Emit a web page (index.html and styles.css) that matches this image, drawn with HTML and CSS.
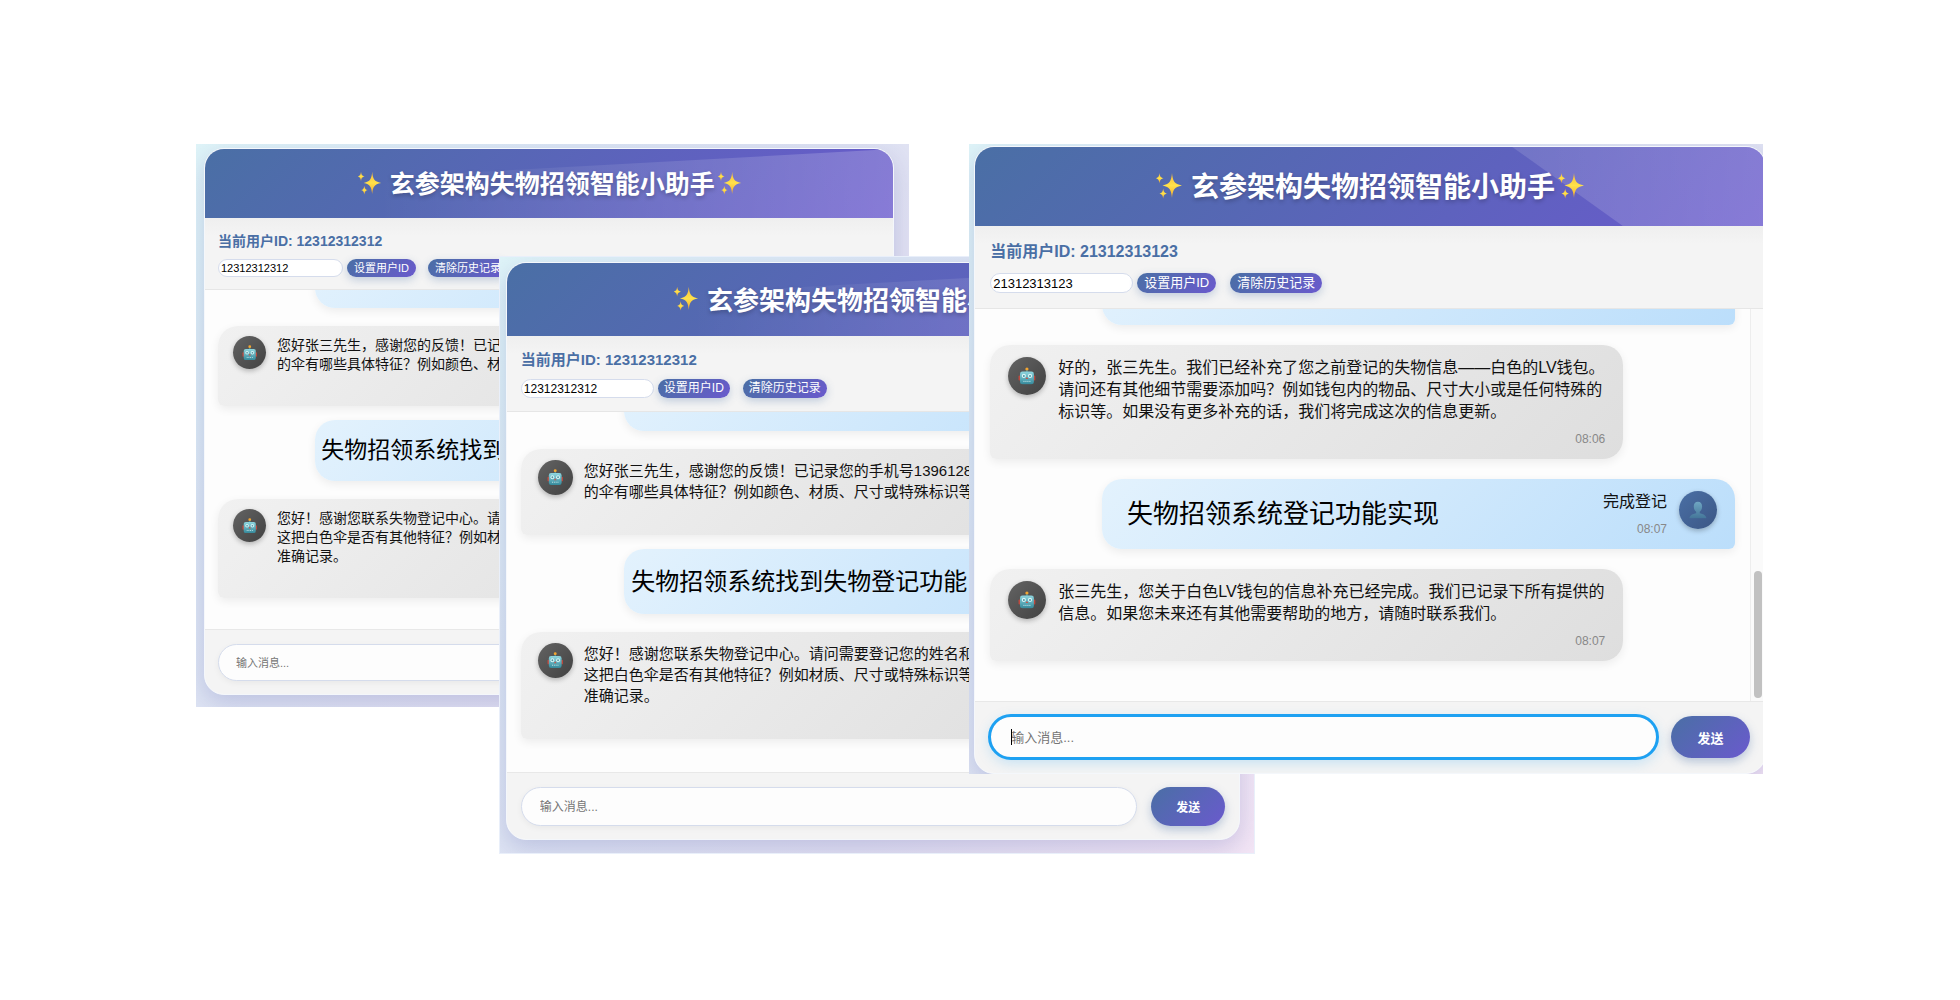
FILE: index.html
```html
<!DOCTYPE html>
<html lang="zh-CN">
  <head>
    <title>玄参架构失物招领智能小助手</title>
    <meta name="viewport" content="width=device-width, initial-scale=1" />
    <meta charset="utf-8" />
    <link rel="stylesheet" href="styles.css" />
  </head>
  <body>
    <!-- shared icons -->
    <svg class="icons" aria-hidden="true">
      <defs>
        <linearGradient id="gold" x1="0" y1="0" x2="0" y2="1">
          <stop offset="0" stop-color="#f6b93b" />
          <stop offset="0.5" stop-color="#ffe14a" />
          <stop offset="1" stop-color="#f3a52c" />
        </linearGradient>
        <linearGradient id="metal" x1="0" y1="0" x2="0" y2="1">
          <stop offset="0" stop-color="#8fd6df" />
          <stop offset="1" stop-color="#35899b" />
        </linearGradient>
        <linearGradient id="person" x1="0" y1="0" x2="0" y2="1">
          <stop offset="0" stop-color="#6fa6c2" />
          <stop offset="1" stop-color="#447699" />
        </linearGradient>
      </defs>
      <symbol id="sparkles" viewBox="0 0 28 28">
        <path fill="url(#gold)" d="M17 2C17.800 10 19 13 27 14.500C19 16 17.800 19 17 27C16.200 19 15 16 7.500 14.500C15 13 16.200 10 17 2Z" />
        <path fill="url(#gold)" d="M4.500 2C5 5.500 5.600 6.500 8.500 7.200C5.600 8 5 9 4.500 12.500C4 9 3.400 8 .8 7.200C3.400 6.500 4 5.500 4.500 2Z" />
        <path fill="url(#gold)" d="M8.200 17.500C8.700 20.800 9.300 21.800 12 22.500C9.300 23.200 8.700 24.300 8.200 27.500C7.700 24.300 7.100 23.200 4.500 22.500C7.100 21.800 7.700 20.800 8.200 17.500Z" />
      </symbol>
      <symbol id="robot" viewBox="0 0 18 18">
        <path fill="#3f97a8" d="M8.300 2.500h1.400v3H8.300z" />
        <circle cx="9" cy="2" r="1.600" fill="#f2a531" />
        <rect x=".5" y="8.500" width="2" height="5" rx="1" fill="#c0483d" />
        <rect x="15.500" y="8.500" width="2" height="5" rx="1" fill="#c0483d" />
        <rect x="2" y="4.500" width="14" height="13" rx="2.500" fill="url(#metal)" />
        <circle cx="5.900" cy="9" r="2.100" fill="#d9f5f7" />
        <circle cx="12.100" cy="9" r="2.100" fill="#d9f5f7" />
        <circle cx="5.900" cy="9" r="1" fill="#4d95a2" />
        <circle cx="12.100" cy="9" r="1" fill="#4d95a2" />
        <path fill="#c8564c" d="M9 10l1.400 2.200H7.600z" />
        <path fill="none" stroke="#d5eef0" d="M5.500 14.500h7" stroke-dasharray="1 1" />
      </symbol>
      <symbol id="user" viewBox="0 0 18 18">
        <path fill="url(#person)" d="M9 .8C6.300.8 4.800 2.700 4.800 5.500C4.800 8 5.900 9.800 7.200 10.900V12.400C4 13.200 1 14 .3 17.500H17.700C17 14 14 13.200 10.800 12.400V10.900C12.100 9.800 13.200 8 13.200 5.500C13.200 2.700 11.700.8 9 .8Z" />
      </symbol>
    </svg>

    <main class="stage">
      <section class="window window--back">
        <div class="card">
          <header class="header">
            <h1 class="title">
              <svg class="sparkle"><use href="#sparkles" /></svg>
              <span>玄参架构失物招领智能小助手</span>
              <svg class="sparkle"><use href="#sparkles" /></svg>
            </h1>
          </header>
          <div class="userbar">
            <label class="userLabel" for="userId1">当前用户ID: 12312312312</label>
            <div class="userRow">
              <input type="text" class="userInput" id="userId1" value="12312312312" />
              <button class="smallButton">设置用户ID</button>
              <button class="smallButton clear">清除历史记录</button>
            </div>
          </div>
          <div class="chat">
            <div class="log">
              <div class="bubble user"></div>
              <div class="bubble bot">
                <div class="avatar"><svg><use href="#robot" /></svg></div>
                <div class="body">
                  <p>您好张三先生，感谢您的反馈！已记录<br />的伞有哪些具体特征？例如颜色、材质</p>
                  <time class="time"></time>
                </div>
              </div>
              <div class="bubble user">
                <p class="caption">失物招领系统找到</p>
              </div>
              <div class="bubble bot">
                <div class="avatar"><svg><use href="#robot" /></svg></div>
                <div class="body">
                  <p>您好！感谢您联系失物登记中心。请问<br />这把白色伞是否有其他特征？例如材质<br />准确记录。</p>
                  <time class="time"></time>
                </div>
              </div>
            </div>
            <div class="track"></div>
          </div>
          <form class="composer">
            <div class="field">
              <input type="text" class="message" placeholder="输入消息..." aria-label="输入消息" />
            </div>
          </form>
        </div>
      </section>

      <section class="window window--middle">
        <div class="card">
          <header class="header">
            <h1 class="title">
              <svg class="sparkle"><use href="#sparkles" /></svg>
              <span>玄参架构失物招领智能小助手</span>
              <svg class="sparkle"><use href="#sparkles" /></svg>
            </h1>
          </header>
          <div class="userbar">
            <label class="userLabel" for="userId2">当前用户ID: 12312312312</label>
            <div class="userRow">
              <input type="text" class="userInput" id="userId2" value="12312312312" />
              <button class="smallButton">设置用户ID</button>
              <button class="smallButton clear">清除历史记录</button>
            </div>
          </div>
          <div class="chat">
            <div class="log">
              <div class="bubble user"></div>
              <div class="bubble bot">
                <div class="avatar"><svg><use href="#robot" /></svg></div>
                <div class="body">
                  <p>您好张三先生，感谢您的反馈！已记录您的手机号13961289<br />的伞有哪些具体特征？例如颜色、材质、尺寸或特殊标识等细</p>
                  <time class="time"></time>
                </div>
              </div>
              <div class="bubble user">
                <p class="caption">失物招领系统找到失物登记功能</p>
              </div>
              <div class="bubble bot">
                <div class="avatar"><svg><use href="#robot" /></svg></div>
                <div class="body">
                  <p>您好！感谢您联系失物登记中心。请问需要登记您的姓名和手<br />这把白色伞是否有其他特征？例如材质、尺寸或特殊标识等细<br />准确记录。</p>
                  <time class="time"></time>
                </div>
              </div>
            </div>
            <div class="track"></div>
          </div>
          <form class="composer">
            <div class="field">
              <input type="text" class="message" placeholder="输入消息..." aria-label="输入消息" />
            </div>
            <button type="button" class="send">发送</button>
          </form>
        </div>
      </section>

      <section class="window window--front">
        <div class="card">
          <header class="header">
            <h1 class="title">
              <svg class="sparkle"><use href="#sparkles" /></svg>
              <span>玄参架构失物招领智能小助手</span>
              <svg class="sparkle"><use href="#sparkles" /></svg>
            </h1>
          </header>
          <div class="userbar">
            <label class="userLabel" for="userId3">当前用户ID: 21312313123</label>
            <div class="userRow">
              <input type="text" class="userInput" id="userId3" value="21312313123" />
              <button class="smallButton">设置用户ID</button>
              <button class="smallButton clear">清除历史记录</button>
            </div>
          </div>
          <div class="chat">
            <div class="log">
              <div class="bubble user"></div>
              <div class="bubble bot">
                <div class="avatar"><svg><use href="#robot" /></svg></div>
                <div class="body">
                  <p>好的，张三先生。我们已经补充了您之前登记的失物信息——白色的LV钱包。<br />请问还有其他细节需要添加吗？例如钱包内的物品、尺寸大小或是任何特殊的<br />标识等。如果没有更多补充的话，我们将完成这次的信息更新。</p>
                  <time class="time">08:06</time>
                </div>
              </div>
              <div class="bubble user">
                <p class="caption">失物招领系统登记功能实现</p>
                <div class="body">
                  <p>完成登记</p>
                  <time class="time">08:07</time>
                </div>
                <div class="avatar"><svg><use href="#user" /></svg></div>
              </div>
              <div class="bubble bot">
                <div class="avatar"><svg><use href="#robot" /></svg></div>
                <div class="body">
                  <p>张三先生，您关于白色LV钱包的信息补充已经完成。我们已记录下所有提供的<br />信息。如果您未来还有其他需要帮助的地方，请随时联系我们。</p>
                  <time class="time">08:07</time>
                </div>
              </div>
            </div>
            <div class="track"><div class="thumb"></div></div>
          </div>
          <form class="composer">
            <div class="field focused">
              <input type="text" class="message" placeholder="输入消息..." aria-label="输入消息" />
            </div>
            <button type="button" class="send">发送</button>
          </form>
        </div>
      </section>
    </main>
  </body>
</html>
```

FILE: styles.css
```css
* {
  margin: 0;
  padding: 0;
  box-sizing: border-box;
}

body {
  background-color: #fff;
  color: #111;
  font-family: "Liberation Sans", "Noto Sans CJK SC", sans-serif;
}

button,
input {
  font-family: inherit;
}

.icons {
  position: absolute;
  width: 0;
  height: 0;
}

.stage {
  position: relative;
  min-height: 100vh;
  overflow: hidden;
}

/* windows, every one in its own scale */
.window {
  position: absolute;
  overflow: hidden;
  background: linear-gradient(135deg, #dff4f8, #dce6f4 30%, #e2e0f2 70%, #f3e5f5);
}

.window--back {
  --title: 25px;
  --text: 14px;
  --line: 19px;
  --small: 11px;
  --caption: 23px;
  --caption-left: 6px;
  --header: 69px;
  --bar-top: 13px;
  --bar-gap: 8px;
  --control: 18px;
  --button-pad: 7px;
  --user-input: 125px;
  --clear-gap: 12px;
  --edge: 13px;
  --log: 339px;
  --log-bottom: 31px;
  --pad-y: 10px;
  --pad-x: 15px;
  --avatar: 33px;
  --gap: 11px;
  --time: 14px;
  --time-gap: 8px;
  --after-bot: 14px;
  --field: 37px;
  --field-pad: 17px;
  --send: 68px;
  top: 144px;
  left: 10%;
  width: 36.4%;
  padding: 4px 15px 12px 8px;
}

.window--middle {
  --title: 26px;
  --text: 15px;
  --line: 21px;
  --small: 12px;
  --caption: 24px;
  --caption-left: 7px;
  --header: 73px;
  --bar-top: 14px;
  --bar-gap: 9px;
  --control: 19px;
  --button-pad: 6px;
  --user-input: 133px;
  --clear-gap: 13px;
  --edge: 14px;
  --log: 360px;
  --log-bottom: 33px;
  --pad-y: 11px;
  --pad-x: 17px;
  --avatar: 35px;
  --gap: 11px;
  --time: 15px;
  --time-gap: 7px;
  --after-bot: 14px;
  --field: 39px;
  --field-pad: 18px;
  --send: 74px;
  top: 256px;
  left: 25.45%;
  width: 38.6%;
  padding: 5px 14px 13px 6px;
  border: 1px solid #e9effa;
}

.window--front {
  --title: 28px;
  --text: 16px;
  --line: 22px;
  --small: 13px;
  --caption: 26px;
  --caption-left: 25px;
  --header: 79px;
  --bar-top: 16px;
  --bar-gap: 11px;
  --control: 20px;
  --button-pad: 7px;
  --user-input: 143px;
  --clear-gap: 14px;
  --edge: 15px;
  --log: 392px;
  --log-bottom: 40px;
  --pad-y: 12px;
  --pad-x: 18px;
  --avatar: 38px;
  --gap: 12px;
  --time: 16px;
  --time-gap: 8px;
  --after-bot: 20px;
  --field: 42px;
  --field-pad: 20px;
  --send: 79px;
  top: 144px;
  left: 49.45%;
  width: 40.5%;
  padding: 2px 0 0 5px;
}

.card {
  border: 1px solid #f4f7fb;
  border-radius: 20px;
  overflow: hidden;
  background-color: #fdfdfd;
  box-shadow: 0 8px 24px rgba(50, 60, 150, 0.2);
}

.window--front .card {
  margin-right: -3px;
}

.header {
  position: relative;
  display: flex;
  align-items: center;
  justify-content: center;
  height: var(--header);
  padding-bottom: 3px;
  background: linear-gradient(135deg, #4a6fa5, #6a5acd);
}

/* light band across the header */
.header::before {
  content: "";
  position: absolute;
  inset: 0;
  background: linear-gradient(90deg, transparent 25%, rgba(255, 255, 255, 0.2));
  clip-path: polygon(0 55%, 100% 0, 100% 100%, 0 100%);
}

.window--front .header::before {
  background: linear-gradient(90deg, rgba(255, 255, 255, 0.1) 60%, rgba(255, 255, 255, 0.2));
  clip-path: polygon(68% 0, 100% 0, 100% 100%, 82% 100%);
}

.title {
  position: relative;
  display: flex;
  align-items: center;
  gap: 2px;
  color: #fff;
  font-size: var(--title);
  text-shadow: 0 2px 4px rgba(0, 0, 0, 0.25);
}

.title span {
  padding-left: 6px;
  white-space: nowrap;
}

.sparkle {
  width: 1em;
  height: 1em;
}

.userbar {
  padding: var(--bar-top) var(--edge) calc(var(--bar-gap) + 4px);
  background: linear-gradient(#efefef, #f4f4f4 18px);
  border-bottom: 1px solid #e6e6e6;
}

.userLabel {
  display: block;
  color: #4a6fa5;
  font-size: var(--text);
  font-weight: bold;
  line-height: 20px;
}

.userRow {
  display: flex;
  gap: 4px;
  margin-top: var(--bar-gap);
}

.userInput {
  width: var(--user-input);
  height: var(--control);
  padding: 0 2px;
  border: 1px solid #d5dcec;
  border-radius: 10px;
  background-color: #fff;
  font-size: var(--small);
}

.smallButton {
  height: var(--control);
  padding: 0 var(--button-pad);
  border: none;
  border-radius: 10px;
  background: linear-gradient(135deg, #4a6fa5, #6a5acd);
  box-shadow: 0 3px 8px rgba(74, 111, 165, 0.3);
  color: #fff;
  font-size: var(--small);
  line-height: var(--control);
  white-space: nowrap;
}

.clear {
  margin-left: calc(var(--clear-gap) - 4px);
}

.chat {
  display: flex;
  height: var(--log);
}

.log {
  flex: 1;
  min-width: 0;
  display: flex;
  flex-direction: column;
  justify-content: flex-end;
  padding: 0 var(--edge) var(--log-bottom);
  overflow: hidden;
}

.track {
  display: flex;
  flex-direction: column;
  justify-content: flex-end;
  width: 15px;
  padding: 3px;
  border-left: 1px solid #ededed;
  background-color: #fafafa;
}

.thumb {
  width: 8px;
  height: 127px;
  border-radius: 4px;
  background-color: #c1c1c1;
}

.bubble {
  display: flex;
  flex-shrink: 0;
  gap: var(--gap);
  width: 85%;
  min-height: calc(var(--line) + var(--time) + var(--time-gap) + 2 * var(--pad-y));
  padding: var(--pad-y) var(--pad-x);
  font-size: var(--text);
  line-height: var(--line);
  box-shadow: 0 3px 10px rgba(0, 0, 0, 0.07);
}

.bot {
  margin-bottom: var(--after-bot);
  border-radius: 20px 20px 20px 6px;
  background: linear-gradient(135deg, #f1f1f1, #dedede);
}

.bot:last-child {
  margin-bottom: 0;
}

.user {
  align-self: flex-end;
  margin-bottom: 18px;
  padding-left: var(--caption-left);
  border-radius: 20px 20px 6px 20px;
  background: linear-gradient(135deg, #e3f2fd, #bbdefb);
}

.window--front .user {
  margin-bottom: 20px;
}

.avatar {
  display: flex;
  align-items: center;
  justify-content: center;
  flex-shrink: 0;
  width: var(--avatar);
  height: var(--avatar);
  border-radius: 50%;
  background: linear-gradient(135deg, #636363, #424242);
  box-shadow: 0 2px 5px rgba(0, 0, 0, 0.25);
}

.user .avatar {
  background: linear-gradient(135deg, #4a6fa5, #3c5785);
}

.avatar svg {
  width: 47%;
  height: 47%;
}

.body {
  flex: 1;
  min-width: 0;
  white-space: nowrap;
}

.user .body {
  flex: none;
  text-align: right;
}

.time {
  display: block;
  height: var(--time);
  margin-top: var(--time-gap);
  color: #888;
  font-size: 12px;
  line-height: var(--time);
  text-align: right;
}

.caption {
  flex: 1;
  align-self: center;
  color: #000;
  font-size: var(--caption);
  white-space: nowrap;
}

.composer {
  display: flex;
  gap: 14px;
  padding: 14px var(--edge) 13px;
  border-top: 1px solid #e8e8e8;
  background-color: #f4f4f4;
}

.window--front .composer {
  padding-bottom: 15px;
}

.field {
  position: relative;
  flex: 1;
}

.message {
  display: block;
  width: 100%;
  height: var(--field);
  padding: 0 var(--field-pad);
  border: 1px solid #d5dcec;
  border-radius: 21px;
  background-color: #fdfdfd;
  box-shadow: 0 2px 6px rgba(0, 0, 0, 0.05);
  font-size: var(--small);
}

.message::placeholder {
  color: #757575;
}

.focused .message {
  outline: 3px solid #1da1f2;
  outline-offset: -1px;
  box-shadow: 0 4px 14px rgba(29, 161, 242, 0.25);
}

/* text cursor */
.focused::before {
  content: "";
  position: absolute;
  top: 13px;
  left: 21px;
  width: 1px;
  height: 16px;
  background-color: #000;
}

.send {
  width: var(--send);
  height: var(--field);
  border: none;
  border-radius: 21px;
  background: linear-gradient(135deg, #4a6fa5, #6a5acd);
  box-shadow: 0 4px 10px rgba(74, 111, 165, 0.35);
  color: #fff;
  font-size: var(--small);
  font-weight: bold;
}
```
